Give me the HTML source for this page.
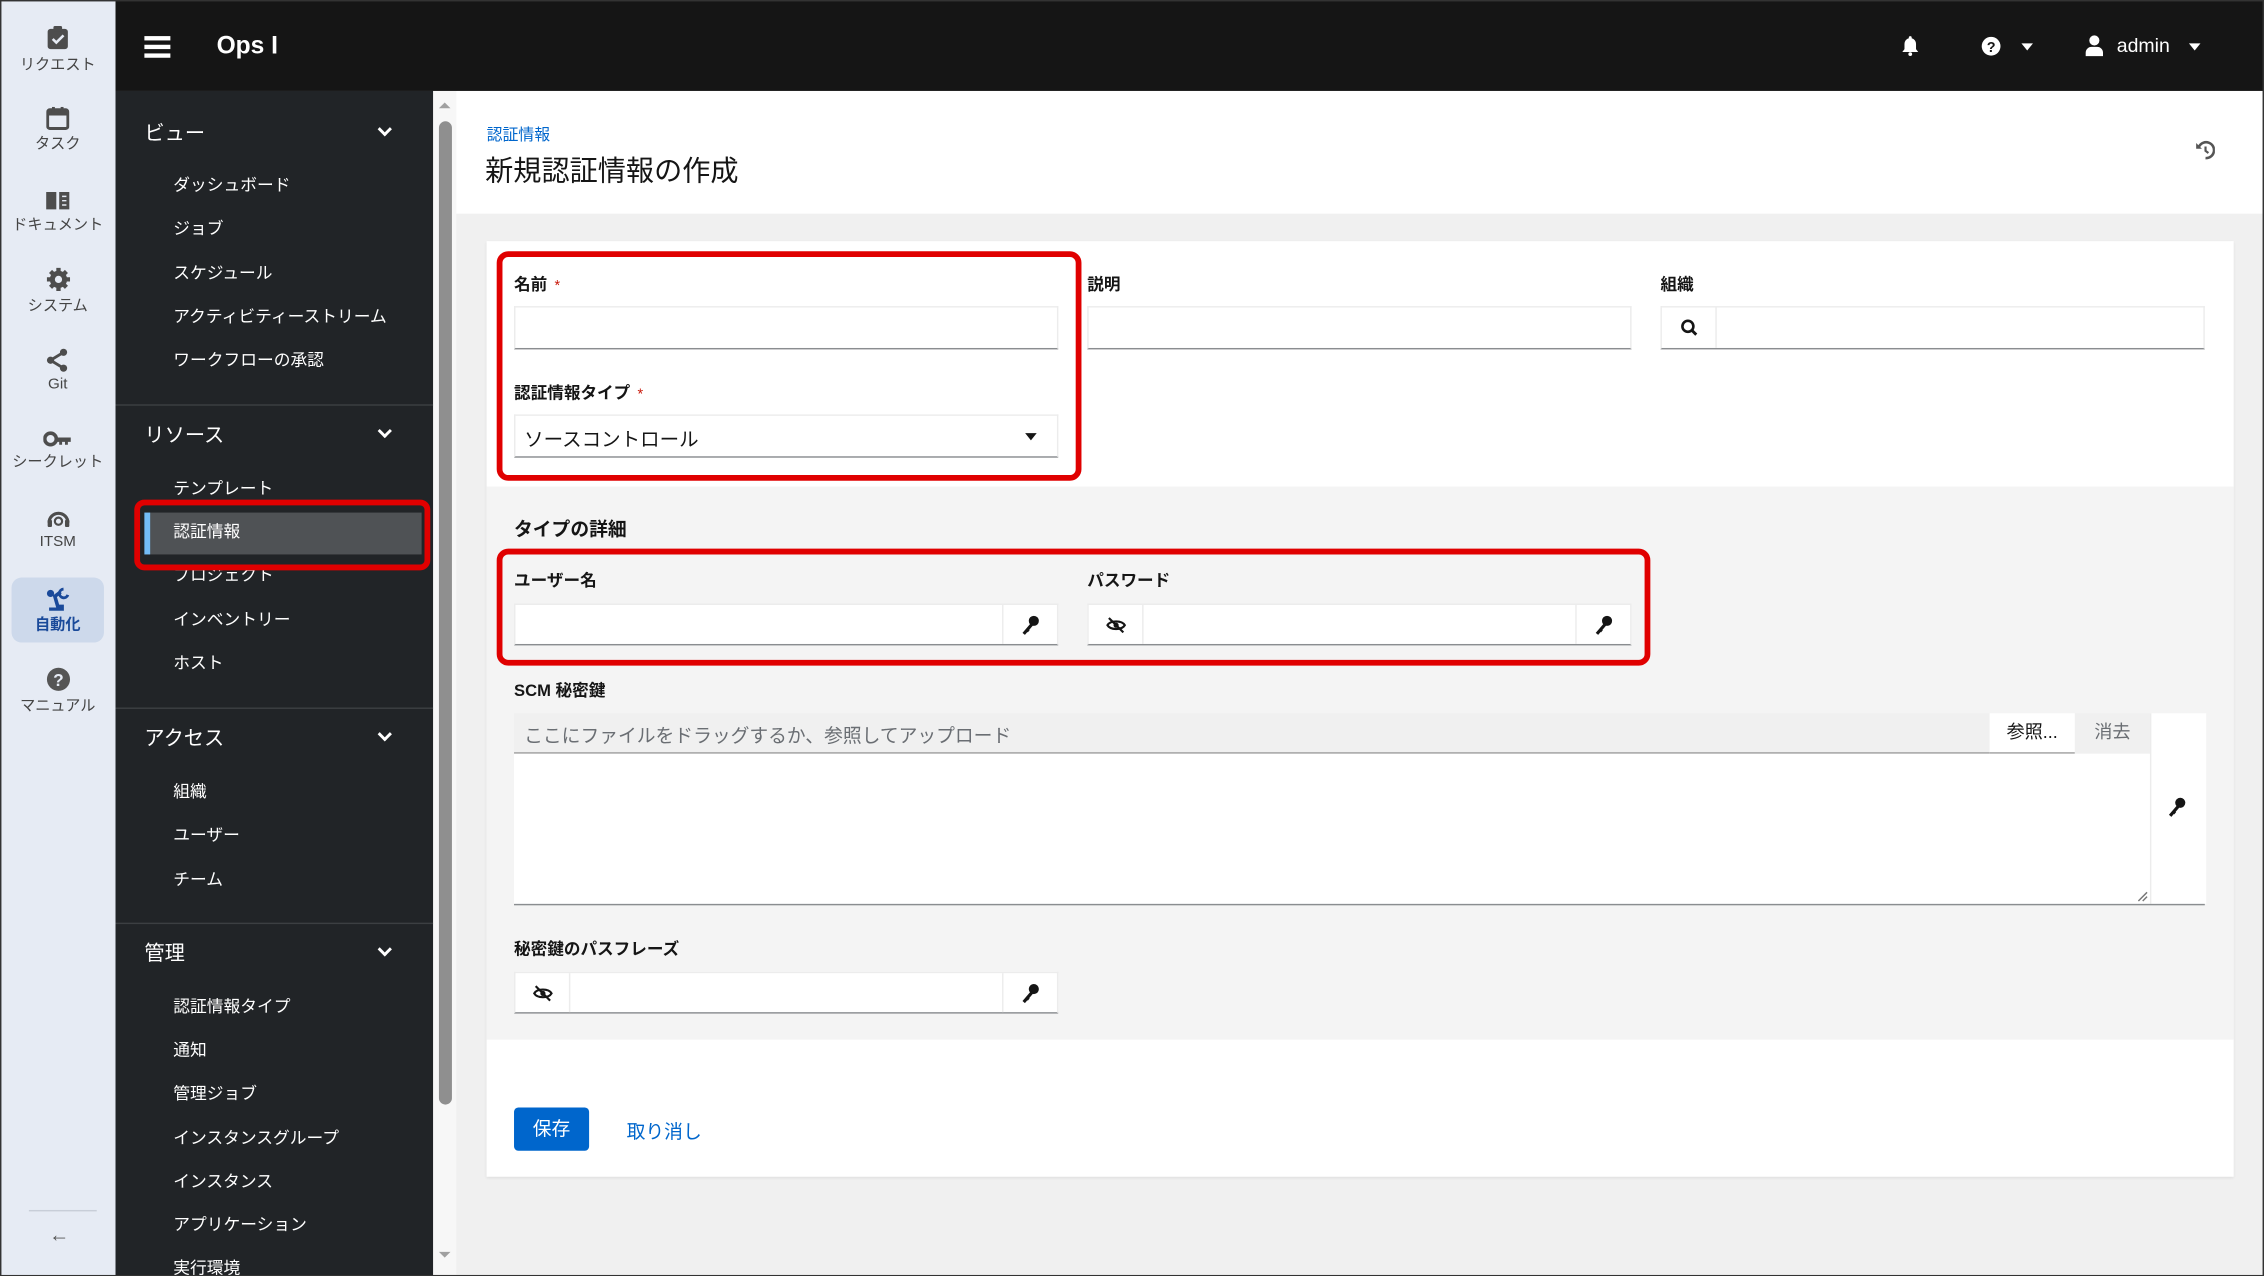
<!DOCTYPE html>
<html><head><meta charset="utf-8"><style>
html,body{margin:0;padding:0;width:2264px;height:1276px;overflow:hidden;background:#fff}
.root{position:absolute;left:0;top:0;width:1568px;height:884px;transform:scale(1.44388);transform-origin:0 0;font-family:"Liberation Sans","Noto Sans CJK JP",sans-serif;background:#f0f0f0;overflow:hidden}
.a{position:absolute}
.rail{left:0;top:0;width:80px;height:884px;background:#e6ebf4;border-right:1px solid #d0d6e0}
.ri{position:absolute;left:0;width:80px;text-align:center;font-size:10.5px;color:#444}
.ri svg{display:block;margin:0 auto 2px}
.top{left:80px;top:0;width:1488px;height:63px;background:#151515}
.nav{left:80px;top:63px;width:220px;height:821px;background:#212427}
.nh{position:absolute;left:20px;font-size:14px;color:#fff;margin-top:-1px}
.chev{position:absolute;left:183px;width:5px;height:5px;border-right:2.5px solid #fff;border-bottom:2.5px solid #fff;transform:rotate(45deg);margin-top:1px}
.ni{position:absolute;left:40px;font-size:11.6px;color:#fff;margin-top:-1px}
.div{position:absolute;left:0;width:220px;height:1px;background:#3c3f42}
.lbl{position:absolute;font-size:11.5px;font-weight:bold;color:#151515}
.req{color:#c9190b;font-weight:normal;margin-left:5px;font-size:10px}
.inp{position:absolute;height:28px;background:#fff;border:1px solid #ececec;border-bottom:1px solid #8a8d90;box-sizing:border-box}
.btn{position:absolute;top:0;height:100%;width:38px;border-left:1px solid #ececec;box-sizing:border-box;display:flex;align-items:center;justify-content:center}
.red{position:absolute;border:4px solid #e00000;border-radius:8px;box-sizing:border-box}
</style></head><body><div class="root">
<div class="a rail">
 <div class="ri" style="top:17px"><svg width="16" height="18" viewBox="0 0 16 18"><rect x="1" y="3" width="14" height="14" rx="2" fill="#4d4d4d"/><rect x="5" y="1" width="6" height="4" rx="1" fill="#4d4d4d"/><path d="M4.5 10l2.5 2.5 5-5" stroke="#e6ebf4" stroke-width="1.8" fill="none"/></svg>リクエスト</div>
 <div class="ri" style="top:74px"><svg width="16" height="16" viewBox="0 0 16 16"><rect x="1" y="2" width="14" height="13" rx="1.5" fill="none" stroke="#4d4d4d" stroke-width="2"/><rect x="1" y="2" width="14" height="4" fill="#4d4d4d"/><rect x="4" y="0" width="2" height="4" fill="#4d4d4d"/><rect x="10" y="0" width="2" height="4" fill="#4d4d4d"/></svg>タスク</div>
 <div class="ri" style="top:131px"><svg width="18" height="15" viewBox="0 0 18 15"><path d="M1 2h7v12H1zM10 2h7v12h-7z" fill="#4d4d4d"/><path d="M12 5h3M12 8h3M12 11h3" stroke="#e6ebf4" stroke-width="1"/></svg>ドキュメント</div>
 <div class="ri" style="top:185px"><svg width="17" height="17" viewBox="0 0 17 17"><circle cx="8.5" cy="8.5" r="6" fill="#4d4d4d"/><path d="M8.5 0.5v16M0.5 8.5h16M3 3l11 11M14 3L3 14" stroke="#4d4d4d" stroke-width="3"/><circle cx="8.5" cy="8.5" r="2.5" fill="#e6ebf4"/></svg>システム</div>
 <div class="ri" style="top:241px"><svg width="16" height="17" viewBox="0 0 16 17"><circle cx="12" cy="3" r="2.5" fill="#4d4d4d"/><circle cx="3" cy="8.5" r="2.5" fill="#4d4d4d"/><circle cx="12" cy="14" r="2.5" fill="#4d4d4d"/><path d="M12 3L3 8.5 12 14" stroke="#4d4d4d" stroke-width="2" fill="none"/></svg>Git</div>
 <div class="ri" style="top:298px"><svg width="20" height="12" viewBox="0 0 20 12"><circle cx="5" cy="6" r="4" fill="none" stroke="#4d4d4d" stroke-width="2.5"/><path d="M9 5h10v3h-2v2h-2V8h-2v2h-2V8H9z" fill="#4d4d4d"/></svg>シークレット</div>
 <div class="ri" style="top:351px"><svg width="17" height="16" viewBox="0 0 17 16"><path d="M2 11a6.5 6.5 0 0113 0" stroke="#4d4d4d" stroke-width="2.2" fill="none"/><rect x="1" y="9" width="3" height="5" rx="1" fill="#4d4d4d"/><rect x="13" y="9" width="3" height="5" rx="1" fill="#4d4d4d"/><circle cx="8.5" cy="10" r="2.5" fill="none" stroke="#4d4d4d" stroke-width="1.5"/></svg>ITSM</div>
 <div class="a" style="left:8px;top:400px;width:64px;height:45px;background:#cdd9eb;border-radius:7px"></div>
 <div class="ri" style="top:406px;color:#1a4a9a;font-weight:bold"><svg width="18" height="17" viewBox="0 0 18 17"><path d="M3 16h9v-2H9l-2-7 4-3" stroke="#1a4a9a" stroke-width="2.5" fill="none"/><circle cx="4" cy="5" r="2.5" fill="#1a4a9a"/><path d="M13 2a3 3 0 103 4" stroke="#1a4a9a" stroke-width="2" fill="none"/></svg>自動化</div>
 <div class="ri" style="top:462px"><svg width="17" height="17" viewBox="0 0 17 17"><circle cx="8.5" cy="8.5" r="8" fill="#555"/><text x="8.5" y="13" font-size="12" font-weight="bold" fill="#e6ebf4" text-anchor="middle" font-family="Liberation Sans">?</text></svg>マニュアル</div>
 <div class="a" style="left:20px;top:838px;width:47px;height:1px;background:#c8ced8"></div>
 <div class="a" style="left:34px;top:847px;font-size:14px;color:#555">←</div>
</div>
<div class="a top">
 <div class="a" style="left:20px;top:25px;width:18px;height:3px;background:#fff;box-shadow:0 6px 0 #fff,0 12px 0 #fff"></div>
 <div class="a" style="left:70px;top:22px;font-size:17px;font-weight:bold;color:#fff">Ops I</div>
 <svg class="a" style="left:1237px;top:24px" width="12" height="15" viewBox="0 0 12 15"><path d="M6 1a1 1 0 011 1v.5A4 4 0 0110 6.5V10l1.5 2h-11L2 10V6.5A4 4 0 015 2.5V2a1 1 0 011-1z" fill="#fff"/><circle cx="6" cy="13.5" r="1.3" fill="#fff"/></svg>
 <svg class="a" style="left:1292px;top:25px" width="14" height="14" viewBox="0 0 14 14"><circle cx="7" cy="7" r="6.5" fill="#fff"/><text x="7" y="11" font-size="10" font-weight="bold" fill="#151515" text-anchor="middle" font-family="Liberation Sans">?</text></svg>
 <div class="a" style="left:1320px;top:30px;border:4px solid transparent;border-top:5px solid #fff"></div>
 <svg class="a" style="left:1364px;top:24px" width="13" height="15" viewBox="0 0 13 15"><circle cx="6.5" cy="4" r="3.5" fill="#fff"/><path d="M0.5 15v-2.5a4 4 0 014-4h4a4 4 0 014 4V15z" fill="#fff"/></svg>
 <div class="a" style="left:1386px;top:24px;font-size:13.5px;color:#fff">admin</div>
 <div class="a" style="left:1436px;top:30px;border:4px solid transparent;border-top:5px solid #fff"></div>
</div>
<div class="a nav">
 <div class="nh" style="top:20px">ビュー</div><div class="chev" style="top:22px"></div>
 <div class="ni" style="top:58px">ダッシュボード</div>
 <div class="ni" style="top:88px">ジョブ</div>
 <div class="ni" style="top:119px">スケジュール</div>
 <div class="ni" style="top:149px">アクティビティーストリーム</div>
 <div class="ni" style="top:179px">ワークフローの承認</div>
 <div class="div" style="top:217px"></div>
 <div class="nh" style="top:229px">リソース</div><div class="chev" style="top:231px"></div>
 <div class="ni" style="top:268px">テンプレート</div>
 <div class="a" style="left:20px;top:292px;width:192px;height:29px;background:#4f5255;border-left:4px solid #73bcf7;box-sizing:border-box"></div>
 <div class="ni" style="top:298px">認証情報</div>
 <div class="ni" style="top:328px">プロジェクト</div>
 <div class="ni" style="top:359px">インベントリー</div>
 <div class="ni" style="top:389px">ホスト</div>
 <div class="div" style="top:427px"></div>
 <div class="nh" style="top:439px">アクセス</div><div class="chev" style="top:441px"></div>
 <div class="ni" style="top:478px">組織</div>
 <div class="ni" style="top:508px">ユーザー</div>
 <div class="ni" style="top:539px">チーム</div>
 <div class="div" style="top:576px"></div>
 <div class="nh" style="top:588px">管理</div><div class="chev" style="top:590px"></div>
 <div class="ni" style="top:627px">認証情報タイプ</div>
 <div class="ni" style="top:657px">通知</div>
 <div class="ni" style="top:687px">管理ジョブ</div>
 <div class="ni" style="top:718px">インスタンスグループ</div>
 <div class="ni" style="top:748px">インスタンス</div>
 <div class="ni" style="top:778px">アプリケーション</div>
 <div class="ni" style="top:808px">実行環境</div>
</div>
<div class="red" style="left:93px;top:346px;width:205px;height:49px;border-radius:7px"></div>
<div class="a" style="left:300px;top:63px;width:16px;height:821px;background:#f7f7f7"></div>
<div class="a" style="left:304px;top:84px;width:9px;height:681px;background:#8f8f8f;border-radius:5px"></div>
<div class="a" style="left:304px;top:71px;border:4px solid transparent;border-bottom:4px solid #a0a0a0;border-top:0"></div>
<div class="a" style="left:304px;top:867px;border:4px solid transparent;border-top:4px solid #a0a0a0;border-bottom:0"></div>
<div class="a" style="left:316px;top:63px;width:1252px;height:85px;background:#fff"></div>
<div class="a" style="left:337px;top:85px;font-size:11px;color:#0066cc">認証情報</div>
<div class="a" style="left:336px;top:102px;font-size:19.5px;color:#151515">新規認証情報の作成</div>
<svg class="a" style="left:1520px;top:97px" width="14" height="14" viewBox="0 0 14 14"><path d="M3 4.5A5.5 5.5 0 117.5 12.5" stroke="#555" stroke-width="1.8" fill="none"/><path d="M1 2v4h4z" fill="#555"/><path d="M7.5 4.5v3l2 1.5" stroke="#555" stroke-width="1.5" fill="none"/></svg>
<div class="a" style="left:337px;top:167px;width:1210px;height:648px;background:#fff;box-shadow:0 1px 2px rgba(0,0,0,.08)"></div>
<div class="a" style="left:337px;top:337px;width:1210px;height:383px;background:#f4f4f4"></div>
<div class="lbl" style="left:356px;top:189px">名前<span class="req">*</span></div>
<div class="inp" style="left:356px;top:212px;width:377px;height:30px"></div>
<div class="lbl" style="left:753px;top:189px">説明</div>
<div class="inp" style="left:753px;top:212px;width:377px;height:30px"></div>
<div class="lbl" style="left:1150px;top:189px">組織</div>
<div class="inp" style="left:1150px;top:212px;width:377px;height:30px"><div class="btn" style="left:0;border-left:0;border-right:1px solid #ececec"><svg width="12" height="12" viewBox="0 0 12 12"><circle cx="5" cy="5" r="3.8" stroke="#151515" stroke-width="1.8" fill="none"/><path d="M7.8 7.8l3 3" stroke="#151515" stroke-width="2"/></svg></div></div>
<div class="lbl" style="left:356px;top:264px">認証情報タイプ<span class="req">*</span></div>
<div class="inp" style="left:356px;top:287px;width:377px;height:30px"><div class="a" style="left:6px;top:5px;font-size:13.5px;color:#151515">ソースコントロール</div><div class="a" style="left:353px;top:12px;border:4px solid transparent;border-top:5px solid #151515"></div></div>
<div class="red" style="left:344px;top:174px;width:405px;height:159px"></div>
<div class="a" style="left:356px;top:356px;font-size:13px;font-weight:bold;color:#151515">タイプの詳細</div>
<div class="lbl" style="left:356px;top:394px">ユーザー名</div>
<div class="inp" style="left:356px;top:418px;width:377px;height:29px"><div class="btn" style="right:0"><svg width="13" height="14" viewBox="0 0 13 14"><circle cx="9" cy="4" r="3.5" fill="#151515"/><path d="M8 6L2 13" stroke="#151515" stroke-width="2.2"/><path d="M4 10l1.5 1.2" stroke="#151515" stroke-width="2"/></svg></div></div>
<div class="lbl" style="left:753px;top:394px">パスワード</div>
<div class="inp" style="left:753px;top:418px;width:377px;height:29px"><div class="btn" style="left:0;border-left:0;border-right:1px solid #ececec"><svg width="14" height="12" viewBox="0 0 14 12"><path d="M1 6c2-3.5 10-3.5 12 0-2 3.5-10 3.5-12 0z" stroke="#151515" stroke-width="1.5" fill="none"/><circle cx="7" cy="6" r="1.8" fill="#151515"/><path d="M2 1l10 10" stroke="#151515" stroke-width="1.5"/></svg></div><div class="btn" style="right:0"><svg width="13" height="14" viewBox="0 0 13 14"><circle cx="9" cy="4" r="3.5" fill="#151515"/><path d="M8 6L2 13" stroke="#151515" stroke-width="2.2"/><path d="M4 10l1.5 1.2" stroke="#151515" stroke-width="2"/></svg></div></div>
<div class="red" style="left:344px;top:380px;width:799px;height:81px"></div>
<div class="lbl" style="left:356px;top:470px">SCM 秘密鍵</div>
<div class="a" style="left:356px;top:494px;width:1022px;height:28px;background:#f0f0f0;border-bottom:1px solid #9a9a9a;box-sizing:border-box"></div>
<div class="a" style="left:363px;top:499px;font-size:13px;color:#6a6e73">ここにファイルをドラッグするか、参照してアップロード</div>
<div class="a" style="left:1378px;top:494px;width:59px;height:28px;background:#fff;border-bottom:1px solid #9a9a9a;box-sizing:border-box;font-size:12.5px;color:#151515;text-align:center;line-height:27px">参照...</div>
<div class="a" style="left:1437px;top:494px;width:52px;height:28px;background:#f0f0f0;font-size:12.5px;color:#6a6e73;text-align:center;line-height:27px">消去</div>
<div class="a" style="left:356px;top:522px;width:1133px;height:104px;background:#fff"></div>
<div class="a" style="left:1489px;top:494px;width:38px;height:132px;background:#fff;border-left:1px solid #ececec"></div>
<svg class="a" style="left:1501px;top:552px" width="13" height="14" viewBox="0 0 13 14"><circle cx="9" cy="4" r="3.5" fill="#151515"/><path d="M8 6L2 13" stroke="#151515" stroke-width="2.2"/><path d="M4 10l1.5 1.2" stroke="#151515" stroke-width="2"/></svg>
<svg class="a" style="left:1478px;top:615px" width="10" height="10" viewBox="0 0 10 10"><path d="M9 3L3 9M9 6L6 9" stroke="#777" stroke-width="1"/></svg>
<div class="a" style="left:356px;top:626px;width:1171px;height:1px;background:#8a8d90"></div>
<div class="lbl" style="left:356px;top:649px">秘密鍵のパスフレーズ</div>
<div class="inp" style="left:356px;top:673px;width:377px;height:29px"><div class="btn" style="left:0;border-left:0;border-right:1px solid #ececec"><svg width="14" height="12" viewBox="0 0 14 12"><path d="M1 6c2-3.5 10-3.5 12 0-2 3.5-10 3.5-12 0z" stroke="#151515" stroke-width="1.5" fill="none"/><circle cx="7" cy="6" r="1.8" fill="#151515"/><path d="M2 1l10 10" stroke="#151515" stroke-width="1.5"/></svg></div><div class="btn" style="right:0"><svg width="13" height="14" viewBox="0 0 13 14"><circle cx="9" cy="4" r="3.5" fill="#151515"/><path d="M8 6L2 13" stroke="#151515" stroke-width="2.2"/><path d="M4 10l1.5 1.2" stroke="#151515" stroke-width="2"/></svg></div></div>
<div class="a" style="left:356px;top:767px;width:52px;height:30px;background:#0066cc;border-radius:3px;color:#fff;font-size:13px;text-align:center;line-height:29px">保存</div>
<div class="a" style="left:434px;top:773px;font-size:13px;color:#0066cc">取り消し</div>
<div class="a" style="left:0;top:0;width:1566px;height:882px;border:1px solid #333"></div>
</div></body></html>
